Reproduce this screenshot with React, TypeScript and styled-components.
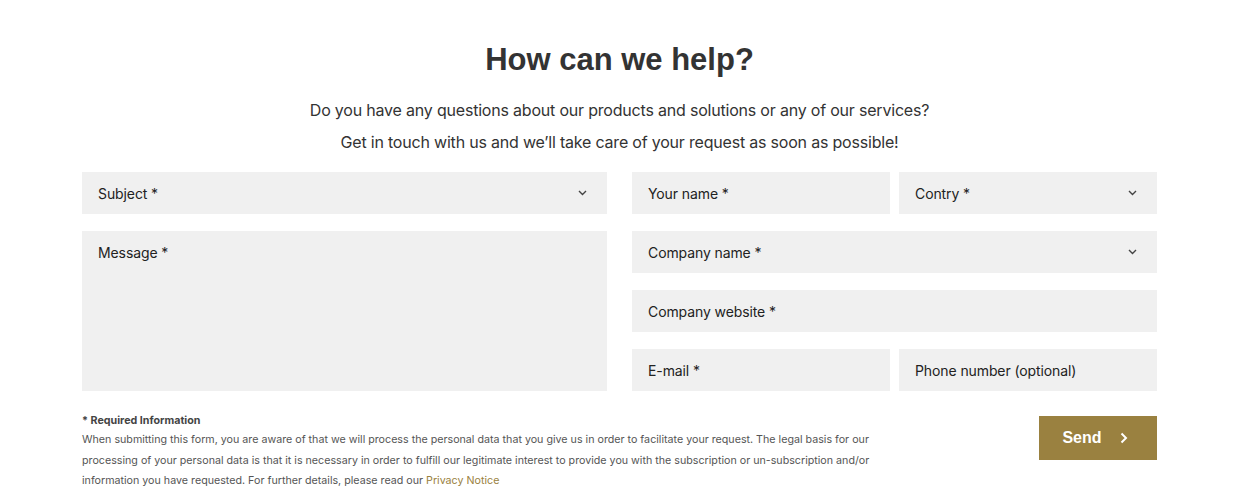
import React from "react";
import styled, { createGlobalStyle } from "styled-components";

const Global = createGlobalStyle`
  html, body { margin: 0; padding: 0; background: #fff; }
  body { font-family: "Inter", "Liberation Sans", sans-serif; color: #333; }
  * { box-sizing: border-box; }
`;

const Page = styled.main`
  width: 1238px;
  padding: 38px 81px 0 82px;
`;

const Title = styled.h1`
  margin: 0;
  text-align: center;
  font-family: "Liberation Sans", Arial, sans-serif;
  font-weight: 700;
  font-size: 31px;
  line-height: 44px;
  color: #333;
`;

const Lead = styled.p`
  margin: 0;
  text-align: center;
  font-size: 16px;
  line-height: 32px;
  color: #333;
  letter-spacing: -0.2px;
`;

const LeadBlock = styled.div`
  margin-top: 12px;
`;

const Form = styled.form`
  margin-top: 14px;
  display: grid;
  grid-template-columns: 525px 525px;
  column-gap: 25px;
`;

const Column = styled.div`
  display: flex;
  flex-direction: column;
  gap: 17px;
`;

const Row = styled.div`
  display: grid;
  grid-template-columns: 1fr 1fr;
  gap: 9px;
`;

const Field = styled.div<{ $tall?: boolean }>`
  background: #f0f0f0;
  height: ${(p) => (p.$tall ? "160px" : "42px")};
  display: flex;
  align-items: ${(p) => (p.$tall ? "flex-start" : "center")};
  justify-content: space-between;
  padding: ${(p) => (p.$tall ? "13px 16px" : "0 20px 0 16px")};
  font-size: 14px;
  letter-spacing: -0.1px;
  color: #222;
`;

const Chevron = () => (
  <svg width="9" height="6" viewBox="0 0 9 6" fill="none">
    <path d="M1 1l3.5 3.5L8 1" stroke="#444" strokeWidth="1.4" />
  </svg>
);

const Bottom = styled.div`
  margin-top: 23px;
  display: flex;
  justify-content: space-between;
  align-items: flex-start;
`;

const Note = styled.div`
  width: 830px;
  font-size: 10.7px;
  line-height: 20.5px;
  color: #555;
`;

const NoteTitle = styled.div`
  font-weight: 700;
  color: #444;
  line-height: 14px;
  margin-bottom: 2px;
`;

const Link = styled.a`
  color: #9a8140;
  text-decoration: none;
`;

const SendButton = styled.button`
  width: 118px;
  height: 44px;
  margin-top: 2px;
  border: none;
  background: #9a8140;
  color: #fff;
  font-family: "Liberation Sans", Arial, sans-serif;
  font-weight: 700;
  font-size: 16px;
  display: flex;
  align-items: center;
  justify-content: center;
  gap: 18px;
  padding-left: 0;
`;

export default function App() {
  return (
    <>
      <Global />
      <Page>
        <Title>How can we help?</Title>
        <LeadBlock>
          <Lead>Do you have any questions about our products and solutions or any of our services?</Lead>
          <Lead>Get in touch with us and we’ll take care of your request as soon as possible!</Lead>
        </LeadBlock>
        <Form>
          <Column>
            <Field>
              Subject *
              <Chevron />
            </Field>
            <Field $tall>Message *</Field>
          </Column>
          <Column>
            <Row>
              <Field>Your name *</Field>
              <Field>
                Contry *
                <Chevron />
              </Field>
            </Row>
            <Field>
              Company name *
              <Chevron />
            </Field>
            <Field>Company website *</Field>
            <Row>
              <Field>E-mail *</Field>
              <Field>Phone number (optional)</Field>
            </Row>
          </Column>
        </Form>
        <Bottom>
          <Note>
            <NoteTitle>* Required Information</NoteTitle>
            When submitting this form, you are aware of that we will process the personal data that you give us in order to facilitate your request. The legal basis for our
            <br />
            processing of your personal data is that it is necessary in order to fulfill our legitimate interest to provide you with the subscription or un-subscription and/or
            <br />
            information you have requested. For further details, please read our{" "}
            <Link href="#">Privacy Notice</Link>
          </Note>
          <SendButton type="button">
            Send
            <svg width="8" height="12" viewBox="0 0 8 12" fill="none">
              <path d="M1.5 1.5L6 6l-4.5 4.5" stroke="#fff" strokeWidth="2" />
            </svg>
          </SendButton>
        </Bottom>
      </Page>
    </>
  );
}
